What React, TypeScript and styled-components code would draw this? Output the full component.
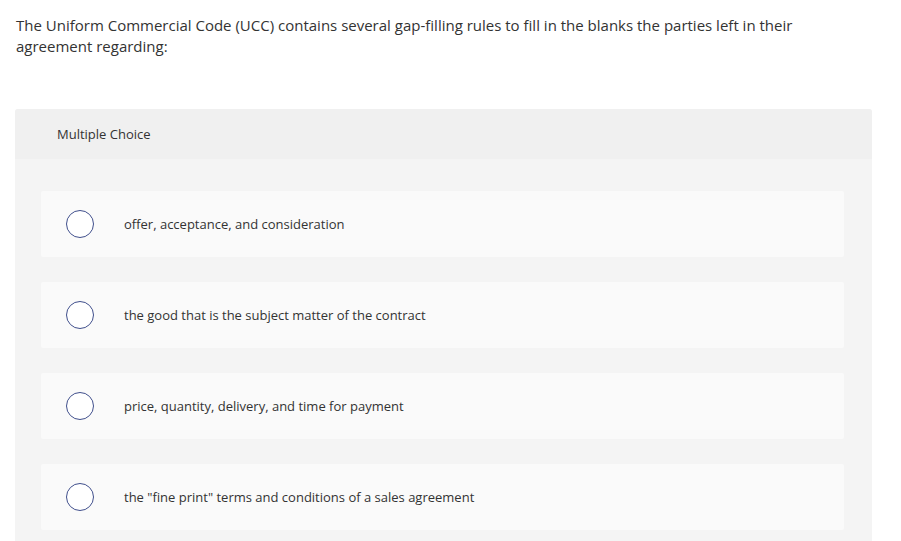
import React from 'react'
import styled, { createGlobalStyle } from 'styled-components'

const GlobalStyle = createGlobalStyle`
  html, body {
    margin: 0;
    padding: 0;
    background: #fff;
  }
  body {
    font-family: "Open Sans", Lato, Arial, sans-serif;
    color: #333;
  }
`;

const Page = styled.div`
  display: flex;
  flex-direction: column;
  padding: 15px 29px 0 15px;
`;

const Prompt = styled.p`
  margin: 0 0 52px 1px;
  font-size: 15px;
  line-height: 21px;
  color: #333;
`;

const Panel = styled.div`
  display: flex;
  flex-direction: column;
  background: #f4f4f4;
  border-radius: 3px 3px 0 0;
  overflow: hidden;
`;

const PanelHeader = styled.div`
  display: flex;
  align-items: center;
  height: 50px;
  padding-left: 42px;
  background: #f0f0f0;
  font-size: 13px;
  color: #333;
`;

const OptionList = styled.div`
  display: flex;
  flex-direction: column;
  gap: 25px;
  padding: 32px 28px 11px 26px;
`;

const OptionCard = styled.label`
  display: flex;
  align-items: center;
  height: 66px;
  padding-left: 25px;
  background: #fafafa;
  border-radius: 2px;
  cursor: pointer;
`;

const Radio = styled.span`
  box-sizing: border-box;
  flex: none;
  width: 28px;
  height: 28px;
  border-radius: 50%;
  border: 1.5px solid #404f8c;
  background: #fff;
`;

const OptionText = styled.span`
  margin-left: 30px;
  font-size: 13px;
  color: #333;
`;

const options = [
  'offer, acceptance, and consideration',
  'the good that is the subject matter of the contract',
  'price, quantity, delivery, and time for payment',
  'the "fine print" terms and conditions of a sales agreement',
]

export default function App() {
  return (
    <>
      <GlobalStyle />
      <Page>
        <Prompt>
          The Uniform Commercial Code (UCC) contains several gap-filling rules to fill in the blanks the parties left in their agreement regarding:
        </Prompt>
        <Panel>
          <PanelHeader>Multiple Choice</PanelHeader>
          <OptionList>
            {options.map(text => (
              <OptionCard key={text}>
                <Radio />
                <OptionText>{text}</OptionText>
              </OptionCard>
            ))}
          </OptionList>
        </Panel>
      </Page>
    </>
  )
}
